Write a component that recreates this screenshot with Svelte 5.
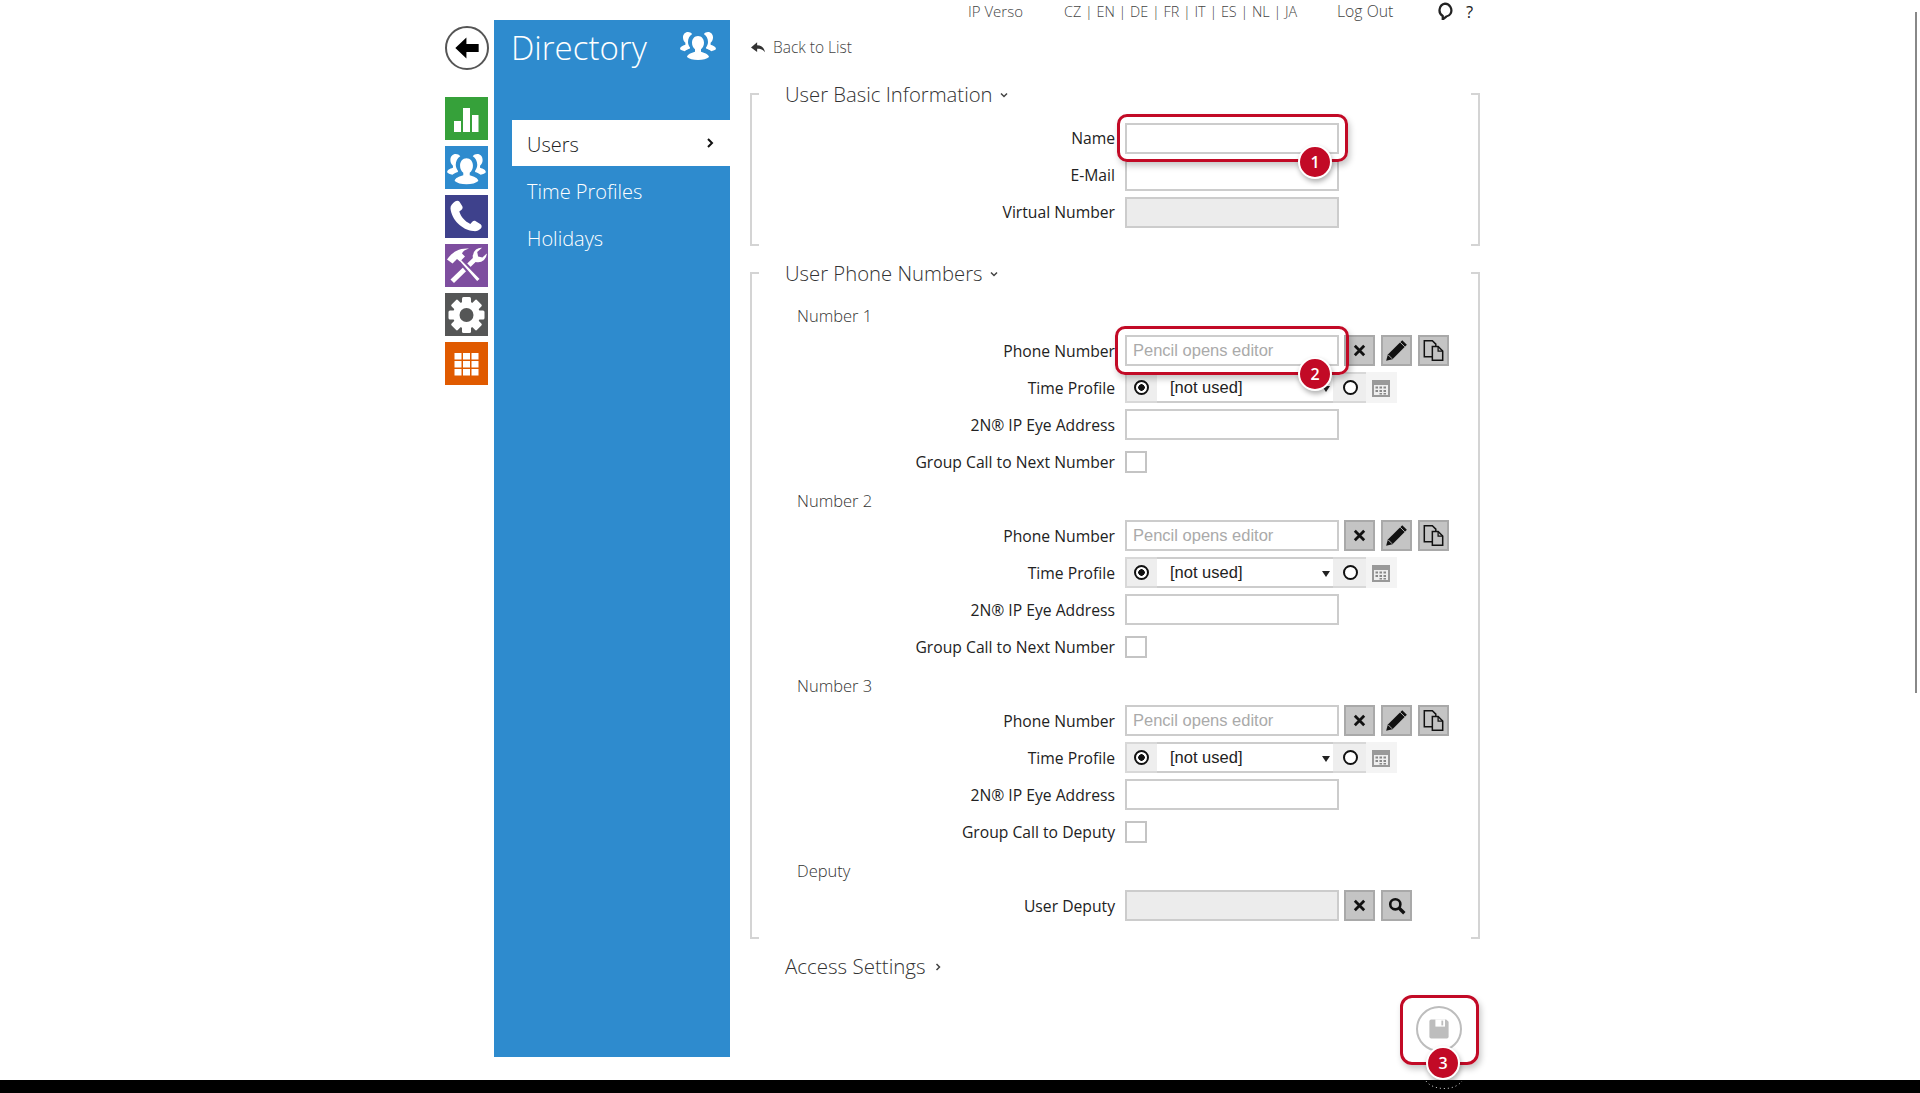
<script>
  const tiles = ['chart', 'people', 'phone', 'tools', 'gear', 'grid'];
  const menu = ['Users', 'Time Profiles', 'Holidays'];
  const teeth = [0, 45, 90, 135, 180, 225, 270, 315];
  const numbers = [
    { title: 'Number 1', group: 'Group Call to Next Number' },
    { title: 'Number 2', group: 'Group Call to Next Number' },
    { title: 'Number 3', group: 'Group Call to Deputy' }
  ];
  const peoplePath = 'M18 9c-3.6 0-6 2.9-6 6.8 0 2.8 1.2 5.1 3 6.5v2.4c-3.8 1.2-7.6 2.4-8 5.3 2 1.9 6.2 3 11 3s9-1.1 11-3c-.4-2.9-4.2-4.1-8-5.3v-2.4c1.8-1.4 3-3.7 3-6.5C24 11.9 21.6 9 18 9zM8 5c-3 0-5 2.4-5 5.5 0 2.2.9 4.1 2.4 5.3v2C2.4 18.8 0 19.8 0 22c.7 1 2.5 1.8 4.900 2.200 1.200-1.100 3.100-1.900 5.100-2.600v-1.100C8.700 18.800 8 17 8 15c0-3.500 1.600-6.500 4.200-8C11.200 5.700 9.700 5 8 5zM28 5c-1.700 0-3.200.7-4.200 2 2.600 1.500 4.200 4.500 4.200 8 0 2-.7 3.800-2 5.500v1.100c2 .7 3.900 1.500 5.100 2.600C33.500 23.800 35.300 23 36 22c0-2.200-2.400-3.200-5.400-4.200v-2c1.500-1.200 2.400-3.100 2.400-5.300C33 7.400 31 5 28 5z';
</script>

{#snippet people()}
  <svg viewBox="0 0 36 36" class="fill"><path d={peoplePath} /></svg>
{/snippet}

{#snippet xIcon()}
  <svg viewBox="0 0 16 16" class="btn-icon"><path d="M3 3l10 10M13 3L3 13" stroke="#111" stroke-width="3" fill="none" /></svg>
{/snippet}

{#snippet textbox(kind = '', placeholder = '')}
  <div class="input {kind}">{placeholder}</div>
{/snippet}

<div class="page">
  <nav class="rail">
    <div class="back">
      <svg viewBox="0 0 24 24"><path d="M2 12l9.500-9v5.500h10.500v7H11.500V21z" fill="#000" /></svg>
    </div>
    <div class="tiles">
      {#each tiles as t}
        <div class="tile {t}">
          {#if t === 'chart'}
            <svg viewBox="0 0 43 43" class="fill"><path d="M9 24h7v11H9zM18 11h7v24h-7zM27 18h6.500v17H27z" /></svg>
          {:else if t === 'people'}
            <svg viewBox="-2 -2.500 40 40" class="fill"><path d={peoplePath} /></svg>
          {:else if t === 'phone'}
            <svg viewBox="0 0 43 43" class="fill"><path d="M10 6.500c1.500-1.200 3.500-1.200 4.500.3l2.800 4.500c.7 1.200.3 2.500-.7 3.400l-2.300 1.900c1.700 5.500 5.600 10 11 12.300l2-2.200c1-1 2.400-1.200 3.500-.4l4.800 3c1.400 1 1.400 3 .2 4.300-1.900 2-4.600 3-7.500 2.500C17 35 6.500 24.500 5.500 13.500c-.3-2.700 2-5.200 4.500-7z" /></svg>
          {:else if t === 'tools'}
            <svg viewBox="0 0 43 43" class="fill">
              <path d="M31 5.500a9 9 0 0 1 6-1.800l-4.800 4.300.9 4.500 4.300 1 4.400-4.100a9 9 0 0 1-2.800 6.600 9 9 0 0 1-8.400 1.900L9 39l-3.500-3.500L27.900 14a9 9 0 0 1 3.100-8.500z" />
              <path d="M15.500 14l-2.500 2.500 19 22 4-3.500z" stroke="#7e4e9f" stroke-width="2" />
              <path d="M2 15.500C6 9.500 13 3.500 24 4.500c-3.500 1-6.500 2.800-7 5l3 3-5 5-3-2.500-4.500 4.500z" />
            </svg>
          {:else if t === 'gear'}
            <svg viewBox="0 0 43 43" class="fill">
              <circle cx="21.500" cy="22" r="13.500" />
              {#each teeth as a}
                <rect x="17" y="4" width="9" height="9" rx="1.500" transform="rotate({a} 21.500 22)" />
              {/each}
              <circle cx="21.500" cy="22" r="7" fill="#555656" />
            </svg>
          {:else}
            <svg viewBox="0 0 43 43" class="fill"><path d="M9.500 11h7v6.500h-7zM18 11h7v6.500h-7zM26.500 11h7v6.500h-7zM9.500 19h7v6.500h-7zM18 19h7v6.500h-7zM26.500 19h7v6.500h-7zM9.500 27h7v6.500h-7zM18 27h7v6.500h-7zM26.500 27h7v6.500h-7z" /></svg>
          {/if}
        </div>
      {/each}
    </div>
  </nav>

  <aside class="side">
    <header class="side-head">
      <h1>Directory</h1>
      <span class="side-icon">{@render people()}</span>
    </header>
    <ul>
      {#each menu as item, i}
        <li class:active={i === 0}>
          {item}
          {#if i === 0}
            <svg viewBox="0 0 10 12" class="chev"><path d="M3 2l4 4-4 4" fill="none" stroke="#111" stroke-width="2" /></svg>
          {/if}
        </li>
      {/each}
    </ul>
  </aside>

  <main class="main">
    <div class="topnav">
      <span class="t1">IP Verso</span>
      <span class="t2">CZ | EN | DE | FR | IT | ES | NL | JA</span>
      <span class="t3">Log Out</span>
      <svg viewBox="0 0 16 16" class="bubble"><path d="M8 1.500a6 6 0 015 8.700 5.500 5.500 0 01-3.800 2.700L6 15.500v-3A6 6 0 018 1.500z" fill="none" stroke="#222" stroke-width="2" /></svg>
      <b class="q">?</b>
    </div>

    <div class="backlink">
      <svg viewBox="0 0 16 14"><path d="M0 7l7-6v3.500c5 0 8 3 9 8-2-3-5-4-9-4V12z" fill="#333" /></svg>
      Back to List
    </div>

    <section class="box basic">
      <h2>User Basic Information <svg viewBox="0 0 10 8" class="tchev"><path d="M2 2.500l3 3 3-3" fill="none" stroke="#444" stroke-width="1.500" /></svg></h2>
      <div class="row"><label>Name</label>{@render textbox()}</div>
      <div class="row"><label>E-Mail</label>{@render textbox()}</div>
      <div class="row"><label>Virtual Number</label>{@render textbox('off')}</div>
    </section>

    <section class="box phones">
      <h2>User Phone Numbers <svg viewBox="0 0 10 8" class="tchev"><path d="M2 2.500l3 3 3-3" fill="none" stroke="#444" stroke-width="1.500" /></svg></h2>
      {#each numbers as n}
        <h3>{n.title}</h3>
        <div class="row">
          <label>Phone Number</label>
          {@render textbox('ph', 'Pencil opens editor')}
          <div class="btns">
            <span class="btn">{@render xIcon()}</span>
            <span class="btn">
              <svg viewBox="0 0 20 20" class="btn-icon big"><path d="M1 19l1.500-5.500L15 1l4 4L6.500 17.500z" fill="#111" /><path d="M2.800 13.800l3.400 3.400" stroke="#c2c2c2" stroke-width=".8" /><path d="M13.200 2.800l4 4" stroke="#c2c2c2" stroke-width=".8" /></svg>
            </span>
            <span class="btn">
              <svg viewBox="0 0 20 20" class="btn-icon big"><path d="M2 1.500h7l3 3v11H2z" fill="none" stroke="#111" stroke-width="1.300" /><path d="M9 6.500h5l4 4v8H9z" fill="#c2c2c2" stroke="#111" stroke-width="1.300" /><path d="M14 6.500v4h4" fill="none" stroke="#111" stroke-width="1.100" /></svg>
            </span>
          </div>
        </div>
        <div class="row">
          <label>Time Profile</label>
          <div class="profile">
            <span class="cell first"><i class="radio on"></i></span>
            <span class="select">[not used]<em></em></span>
            <span class="cell second"><i class="radio"></i></span>
            <span class="cell cal">
              <svg viewBox="0 0 20 20"><path d="M1 2h18v17H1z" fill="#999" /><path d="M3 7h14v10H3z" fill="#eee" /><path d="M4.500 8.500h2.500v2H4.500zM8.500 8.500h2.500v2H8.500zM12.500 8.500h2.500v2h-2.500zM4.500 12h2.500v2H4.500zM8.500 12h2.500v2H8.500zM12.500 12h2.500v2h-2.500zM8.500 15h2.500v1.500H8.500zM12.500 15h2.500v1.500h-2.500z" fill="#888" /></svg>
            </span>
          </div>
        </div>
        <div class="row"><label>2N® IP Eye Address</label>{@render textbox()}</div>
        <div class="row"><label>{n.group}</label><span class="check"></span></div>
      {/each}
      <h3>Deputy</h3>
      <div class="row">
        <label>User Deputy</label>
        {@render textbox('off')}
        <div class="btns">
          <span class="btn">{@render xIcon()}</span>
          <span class="btn">
            <svg viewBox="0 0 16 16" class="btn-icon search"><circle cx="6.500" cy="6.500" r="4.500" fill="none" stroke="#111" stroke-width="2.300" /><path d="M10 10l4.500 4.500" stroke="#111" stroke-width="3" /></svg>
          </span>
        </div>
      </div>
    </section>

    <h2 class="access">Access Settings <svg viewBox="0 0 8 10" class="achev"><path d="M2.500 2l3 3-3 3" fill="none" stroke="#444" stroke-width="1.500" /></svg></h2>

    <div class="savebar">
      <span class="save">
        <svg viewBox="0 0 20 20"><path d="M2 3.500A1.500 1.500 0 013.500 2H16l2 2v12.500a1.500 1.500 0 01-1.500 1.500h-13A1.500 1.500 0 012 16.500z" fill="#bdbdbd" /><path d="M7 2h8v6H7z" fill="#fff" /><path d="M12 3h1.500v4H12z" fill="#bdbdbd" /></svg>
      </span>
    </div>
  </main>

  <div class="mark m1"></div>
  <div class="mark m2"></div>
  <div class="mark m3"></div>
  <span class="badge b1">1</span>
  <span class="badge b2">2</span>
  <span class="badge b3">3</span>
  <div class="thumb"></div>
</div>
<div class="blackbar">
  <svg viewBox="0 0 40 12" class="glitch"><path d="M2 1c6 9 28 11 36 0" fill="none" stroke="#ddd" stroke-width="1" stroke-dasharray="1 3" /></svg>
</div>

<style>
  :global(body) {
    margin: 0;
    background: #fff;
    overflow: hidden;
    font-family: "Open Sans", "Liberation Sans", sans-serif;
    color: #222;
  }
  .page {
    position: relative;
    display: flex;
    box-sizing: border-box;
    height: 1080px;
    padding-left: 445px;
    overflow: hidden;
  }
  .blackbar {
    position: relative;
    height: 13px;
    background: #000;
  }
  .glitch {
    position: absolute;
    left: 1424px;
    top: 0;
    width: 40px;
    height: 12px;
  }
  .fill {
    display: block;
    width: 100%;
    height: 100%;
    fill: #fff;
  }
  .rail {
    width: 43px;
    margin-right: 6px;
    padding-top: 26px;
    flex: none;
  }
  .back {
    box-sizing: border-box;
    width: 44px;
    height: 44px;
    border: 2px solid #555;
    border-radius: 50%;
    padding: 6px;
  }
  .back svg {
    display: block;
  }
  .tiles {
    display: flex;
    flex-direction: column;
    gap: 6px;
    margin-top: 27px;
  }
  .tile {
    width: 43px;
    height: 43px;
  }
  .chart { background: #36a13a; }
  .people { background: #2e8bce; }
  .phone { background: #3e418c; }
  .tools { background: #7e4e9f; }
  .gear { background: #555656; }
  .grid { background: #e05a00; }
  .side {
    flex: none;
    box-sizing: border-box;
    width: 236px;
    height: 1037px;
    margin-top: 20px;
    padding-left: 18px;
    background: #2e8bce;
    color: #fff;
  }
  .side-head {
    display: flex;
    justify-content: space-between;
    height: 100px;
  }
  h1 {
    margin: 0 0 0 -1px;
    font-size: 33px;
    line-height: 56px;
    font-weight: 300;
  }
  .side-icon {
    display: block;
    width: 36px;
    height: 36px;
    margin: 7px 14px 0 0;
  }
  ul {
    margin: 0;
    padding: 0;
    list-style: none;
  }
  li {
    position: relative;
    height: 46px;
    margin-bottom: 1px;
    padding-left: 15px;
    font-size: 20px;
    line-height: 46px;
    font-weight: 300;
  }
  li.active {
    margin-bottom: 3px;
    line-height: 49px;
    background: #fff;
    color: #222;
  }
  .chev {
    position: absolute;
    right: 15px;
    top: 17px;
    width: 10px;
    height: 12px;
  }
  .main {
    flex: none;
    width: 730px;
    margin-left: 20px;
    font-size: 15px;
  }
  .topnav {
    display: flex;
    align-items: center;
    height: 22px;
    font-size: 15px;
    font-weight: 300;
    color: #444;
  }
  .t1 { margin-left: 218px; width: 96px; white-space: nowrap; }
  .t2 { width: 273px; white-space: nowrap; font-size: 14.400px; }
  .t3 { width: 107px; white-space: nowrap; margin-right: -8px; font-size: 15.800px; }
  .bubble { width: 18px; height: 18px; }
  .q {
    margin-left: 12px;
    font-size: 16.500px;
    color: #222;
  }
  .backlink {
    display: flex;
    align-items: center;
    gap: 8px;
    height: 20px;
    margin: 15px 0 0 0;
    font-size: 15.500px;
    font-weight: 300;
    color: #444;
  }
  .backlink svg {
    width: 14px;
    height: 13px;
    margin-left: 1px;
  }
  .box {
    display: flow-root;
    box-sizing: border-box;
    margin: 0;
    padding: 0 0 0 33px;
    border-left: 2px solid #d4d4d4;
    border-right: 2px solid #d4d4d4;
    background:
      linear-gradient(#d4d4d4, #d4d4d4) left top / 7px 2px no-repeat,
      linear-gradient(#d4d4d4, #d4d4d4) right top / 7px 2px no-repeat,
      linear-gradient(#d4d4d4, #d4d4d4) left bottom / 7px 2px no-repeat,
      linear-gradient(#d4d4d4, #d4d4d4) right bottom / 7px 2px no-repeat;
  }
  .basic {
    height: 153px;
    margin-top: 36px;
  }
  .phones {
    height: 667px;
    margin-top: 26px;
  }
  h2 {
    display: flex;
    align-items: center;
    gap: 6px;
    height: 28px;
    margin: -13px 0 0 0;
    font-size: 20.300px;
    line-height: 28px;
    font-weight: 300;
    color: #333;
  }
  .tchev { width: 10px; height: 8px; margin-top: 2px; }
  .achev { width: 8px; height: 10px; margin: 1px 0 0 2px; }
  .basic h2 { margin-bottom: 12px; }
  .phones h2 { margin-bottom: 8px; }
  h3 {
    box-sizing: border-box;
    height: 37px;
    margin: 0 0 0 12px;
    padding-top: 5px;
    font-size: 16.500px;
    line-height: 31px;
    font-weight: 300;
    color: #333;
  }
  .row {
    display: flex;
    align-items: center;
    height: 37px;
    margin-left: -33px;
  }
  label {
    flex: none;
    width: 363px;
    margin-right: 10px;
    text-align: right;
    font-size: 15.700px;
    white-space: nowrap;
    color: #222;
  }
  .basic label {
    margin-top: -2px;
  }
  .input {
    box-sizing: border-box;
    flex: none;
    width: 214px;
    height: 31px;
    border: 2px solid #ccc;
    background: #fff;
    padding-left: 6px;
    font: 16.500px/26px "Liberation Sans", Arial, sans-serif;
    color: #aaa;
  }
  .input.off {
    background: #ececec;
  }
  .btns {
    display: flex;
    gap: 6px;
    margin-left: 5px;
  }
  .btn {
    box-sizing: border-box;
    display: flex;
    align-items: center;
    justify-content: center;
    width: 31px;
    height: 31px;
    border: 2px solid #a9a9a9;
    background: #c4c4c4;
  }
  .btn-icon {
    width: 15px;
    height: 15px;
  }
  .btn-icon.big {
    width: 23px;
    height: 23px;
  }
  .btn-icon.search {
    width: 18px;
    height: 18px;
  }
  .profile {
    display: flex;
    height: 31px;
  }
  .cell {
    display: flex;
    align-items: center;
    justify-content: center;
    box-sizing: border-box;
    width: 33px;
    background: #eee;
    border-top: 2px solid #d8d8d8;
    border-bottom: 2px solid #d8d8d8;
  }
  .first {
    width: 32px;
    padding-right: 1px;
    border-left: 2px solid #d8d8d8;
  }
  .second {
    padding-left: 1px;
  }
  .cal {
    width: 31px;
    padding-right: 2px;
    border: 0;
    background: #f4f4f4;
  }
  .cal svg {
    width: 20px;
    height: 20px;
  }
  .radio {
    box-sizing: border-box;
    display: block;
    width: 15px;
    height: 15px;
    border: 2px solid #111;
    border-radius: 50%;
    background: #fff;
  }
  .radio.on {
    background: radial-gradient(circle, #111 0 3px, #fff 3.500px);
  }
  .select {
    position: relative;
    box-sizing: border-box;
    width: 176px;
    border-top: 2px solid #ccc;
    border-bottom: 2px solid #ccc;
    padding-left: 13px;
    font: 16.500px/27px "Liberation Sans", Arial, sans-serif;
    color: #222;
  }
  .select em {
    position: absolute;
    right: 3px;
    top: 12px;
    border: 4px solid transparent;
    border-top: 6px solid #222;
    border-bottom: 0;
  }
  .check {
    box-sizing: border-box;
    display: block;
    width: 22px;
    height: 22px;
    border: 2px solid #c4c4c4;
  }
  .access {
    margin: 13px 0 0 35px;
    font-size: 20.500px;
  }
  .savebar {
    display: flex;
    justify-content: flex-end;
    padding-right: 18px;
    margin-top: 26px;
  }
  .save {
    box-sizing: border-box;
    display: flex;
    align-items: center;
    justify-content: center;
    width: 46px;
    height: 46px;
    border: 2px solid #bdbdbd;
    border-radius: 50%;
  }
  .save svg {
    width: 24px;
    height: 24px;
  }
  .mark {
    position: absolute;
    box-sizing: border-box;
    border: 3px solid #c20a26;
    border-radius: 10px;
    box-shadow: 2px 4px 6px rgba(0, 0, 0, 0.22);
  }
  .m1 { left: 1117px; top: 114px; width: 231px; height: 48px; }
  .m2 { left: 1115px; top: 326px; width: 234px; height: 49px; }
  .m3 { left: 1400px; top: 995px; width: 79px; height: 70px; border-radius: 12px; }
  .badge {
    position: absolute;
    box-sizing: border-box;
    width: 34px;
    height: 34px;
    border: 2px solid #fff;
    border-radius: 50%;
    background: #c20a26;
    color: #fff;
    font-size: 16px;
    font-weight: 600;
    line-height: 30px;
    text-align: center;
    box-shadow: 1px 3px 5px rgba(0, 0, 0, 0.3);
  }
  .b1 { left: 1298px; top: 145px; }
  .b2 { left: 1298px; top: 357px; }
  .b3 { left: 1426px; top: 1046px; }
  .thumb {
    position: absolute;
    right: 3px;
    top: 12px;
    width: 2px;
    height: 681px;
    background: #888;
  }
</style>
